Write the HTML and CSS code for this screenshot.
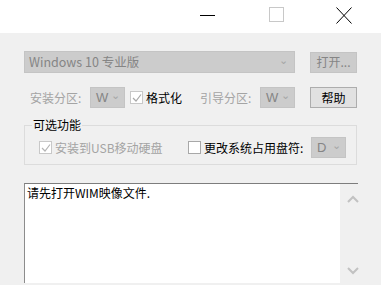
FILE: index.html
```html
<!DOCTYPE html>
<html lang="zh-CN">
<head>
    <meta charset="UTF-8">
    <title>WinToUSB 安装</title>
    <link rel="stylesheet" href="styles.css">
</head>
<body>
    <div class="window">
        <!-- Barra de título -->
        <div class="titlebar">
            <div class="caption-btn">
                <svg width="16" height="16" viewBox="0 0 16 16"><line x1="0" y1="8.5" x2="15" y2="8.5" stroke="#000" stroke-width="1"/></svg>
            </div>
            <div class="caption-btn">
                <svg width="16" height="16" viewBox="0 0 16 16"><rect x="0.5" y="0.5" width="14" height="14" fill="none" stroke="#c8c8c8" stroke-width="1"/></svg>
            </div>
            <div class="caption-btn close">
                <svg width="16" height="17" viewBox="0 0 16 17"><path d="M0.5 0.5 L15.5 16.5 M15.5 0.5 L0.5 16.5" stroke="#000" stroke-width="1" fill="none"/></svg>
            </div>
        </div>

        <div class="content">
            <div class="row row-image">
                <div class="combo combo-wide">
                    <span>Windows 10 专业版</span>
                    <span class="arrow">&#8964;</span>
                </div>
                <button class="btn disabled">打开...</button>
            </div>

            <div class="row row-part">
                <span class="label muted lbl-install">安装分区:</span>
                <div class="combo combo-small"><span>W</span><span class="arrow">&#8964;</span></div>
                <label class="check">
                    <span class="box">
                        <svg width="10" height="10" viewBox="0 0 10 10"><path d="M1 5 L4 8 L9 1.5" fill="none" stroke="#a8a8a8" stroke-width="1.2"/></svg>
                    </span>
                    <span>格式化</span>
                </label>
                <span class="label muted lbl-boot">引导分区:</span>
                <div class="combo combo-small"><span>W</span><span class="arrow">&#8964;</span></div>
                <button class="btn btn-help">帮助</button>
            </div>

            <fieldset class="options">
                <legend>可选功能</legend>
                <div class="options-row">
                    <label class="check check-usb muted">
                        <span class="box">
                            <svg width="10" height="10" viewBox="0 0 10 10"><path d="M1 5 L4 8 L9 1.5" fill="none" stroke="#b4b4b4" stroke-width="1.2"/></svg>
                        </span>
                        <span>安装到USB移动硬盘</span>
                    </label>
                    <label class="check check-drive">
                        <span class="box box-empty"></span>
                        <span>更改系统占用盘符:</span>
                    </label>
                    <div class="combo combo-small"><span>D</span><span class="arrow">&#8964;</span></div>
                </div>
            </fieldset>

            <div class="log">
                <div class="log-text">请先打开WIM映像文件.</div>
                <div class="scrollbar">
                    <svg width="12" height="8" viewBox="0 0 12 8"><path d="M1 7 L6 2 L11 7" fill="none" stroke="#c2c2c2" stroke-width="2"/></svg>
                    <svg width="12" height="8" viewBox="0 0 12 8"><path d="M1 1 L6 6 L11 1" fill="none" stroke="#c2c2c2" stroke-width="2"/></svg>
                </div>
            </div>
        </div>
    </div>
</body>
</html>
```
FILE: styles.css
```css
body {
    margin: 0;
    padding: 0;
    font-family: "Noto Sans CJK SC", "Liberation Sans", sans-serif;
    font-size: 12px;
    background-color: #f0f0f0;
    overflow: hidden;
}

.window {
    width: 381px;
    height: 285px;
    overflow: hidden;
}

.titlebar {
    height: 33px;
    background-color: #fff;
    display: flex;
    justify-content: flex-end;
}

.caption-btn {
    width: 69px;
    display: flex;
    justify-content: center;
    align-items: flex-start;
    padding-top: 7px;
    box-sizing: border-box;
}

.caption-btn.close {
    width: 70px;
    padding-right: 5px;
}

.content {
    padding: 18px 24px 0 24px;
}

.row {
    display: flex;
    align-items: center;
}

.row-image {
    height: 22px;
}

.combo {
    display: flex;
    align-items: center;
    justify-content: space-between;
    box-sizing: border-box;
    background-color: #cccccc;
    border: 1px solid #c4c4c4;
    color: #858585;
    line-height: 14px;
}

.combo-wide {
    width: 271px;
    height: 22px;
    padding: 0 6px 0 4px;
    font-size: 12.5px;
}

.combo-small {
    width: 35px;
    height: 21px;
    padding: 0 4px 0 5px;
    font-family: "Liberation Sans", sans-serif;
    font-size: 13px;
}

.arrow {
    color: #a6a6a6;
    font-size: 11px;
    margin-top: -6px;
}

.btn {
    margin-left: 15px;
    width: 47px;
    height: 21px;
    font-family: inherit;
    font-size: 12px;
    line-height: 14px;
    padding: 0;
    background-color: #e1e1e1;
    border: 1px solid #adadad;
    color: #000;
}

.btn.disabled {
    background-color: #cccccc;
    border-color: #c4c4c4;
    color: #858585;
}

.row-part {
    margin-top: 14px;
    height: 21px;
}

.label {
    line-height: 14px;
}

.muted {
    color: #a4a4a4;
}

.lbl-install {
    margin-left: 6px;
    width: 60px;
}

.lbl-boot {
    margin-left: 18px;
    width: 60px;
}

.check {
    display: flex;
    align-items: center;
    gap: 3px;
    line-height: 14px;
}

.row-part .check {
    margin-left: 5px;
}

.box {
    width: 11px;
    height: 11px;
    border: 1px solid #c8c8c8;
    background-color: #fff;
    display: flex;
    align-items: center;
    justify-content: center;
}

.box-empty {
    border-color: #a8a8a8;
}

.options {
    margin: 10px 0 0 0;
    padding: 5px 0 6px 14px;
    border: 1px solid #dcdcdc;
    border-radius: 0;
    width: 333px;
    box-sizing: border-box;
}

.options legend {
    padding: 0 1px;
    margin-left: -7px;
    line-height: 14px;
    color: #000;
}

.options-row {
    display: flex;
    align-items: center;
}

.check-usb {
    width: 149px;
}

.check-drive {
    width: 123px;
}

.log {
    margin-top: 18px;
    width: 334px;
    height: 100px;
    display: flex;
    border-top: 1px solid #7d7d7d;
    border-left: 1px solid #8c8c8c;
    box-sizing: border-box;
    background-color: #fff;
}

.log-text {
    flex: 1;
    padding: 2px 2px;
    line-height: 14px;
    color: #000;
}

.scrollbar {
    width: 18px;
    background-color: #f0f0f0;
    display: flex;
    flex-direction: column;
    justify-content: space-between;
    padding: 11px 0 8px 7px;
    box-sizing: border-box;
}

.scrollbar svg {
    flex-shrink: 0;
    overflow: visible;
}
```
